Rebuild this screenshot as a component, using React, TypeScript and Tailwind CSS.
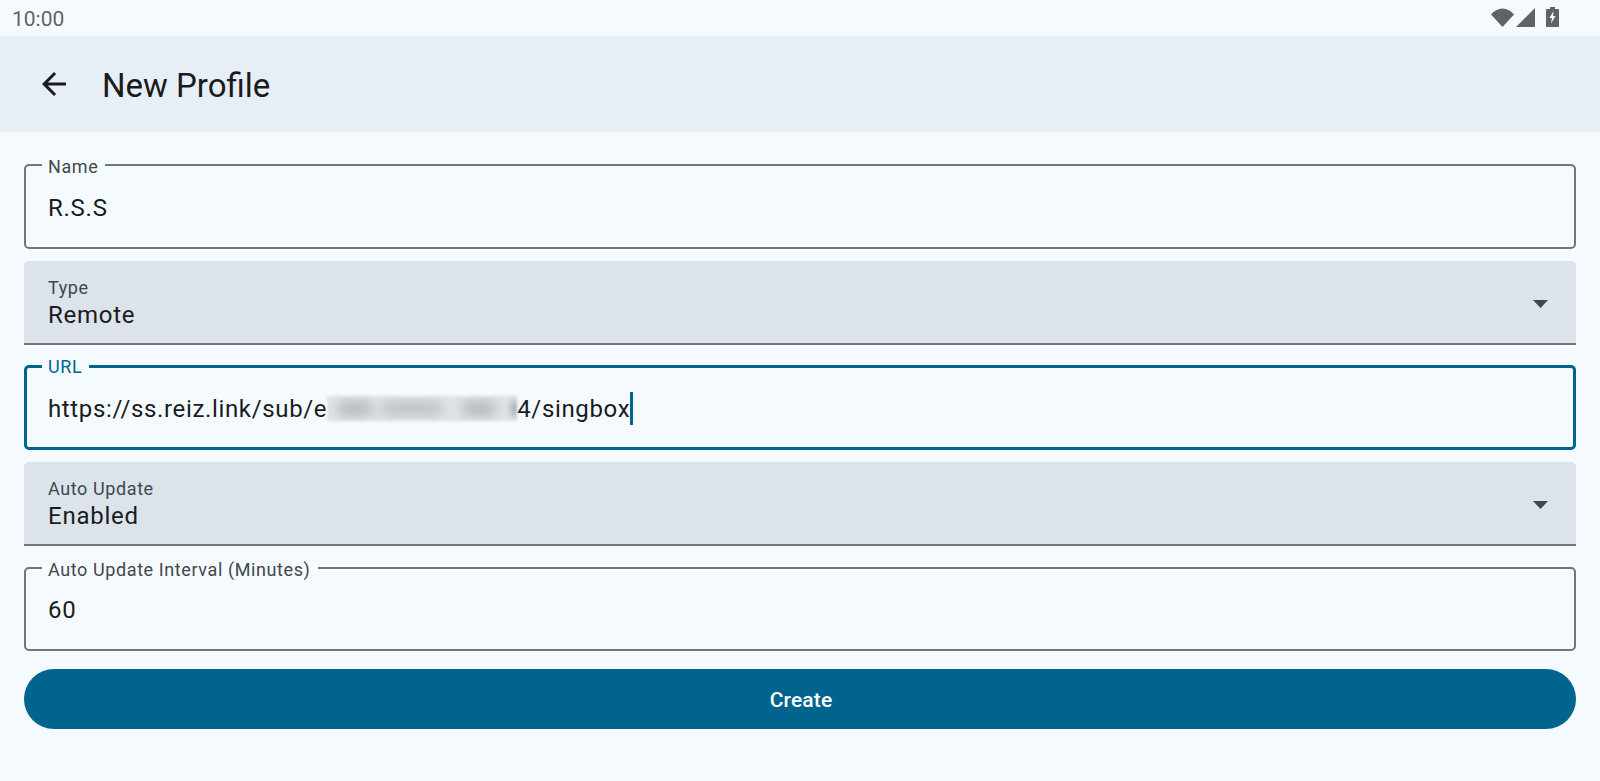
import { ReactNode } from 'react';

const font = { fontFamily: 'Roboto, "Noto Sans", sans-serif' };

function StatusIcons() {
  return (
    <div className="flex items-start pt-[8px] h-[36px]">
      <svg width="23" height="19" viewBox="0 0 23 19" className="mr-[2px]">
        <path d="M0 6.5C3 3 7 0.5 11.5 0.5S20 3 23 6.5L11.5 19z" fill="#5f6368" />
      </svg>
      <svg width="19" height="19" viewBox="0 0 19 19" className="mr-[11px]">
        <path d="M19 0V19H0z" fill="#5f6368" />
      </svg>
      <svg width="13" height="20" viewBox="0 0 13 20" className="mt-[-1px]">
        <path d="M4 0h5v2h3a1 1 0 0 1 1 1v16a1 1 0 0 1-1 1H1a1 1 0 0 1-1-1V3a1 1 0 0 1 1-1h3z" fill="#5f6368" />
        <path d="M7.5 4 3.5 11h2.4l-.8 5.5 4.4-7.5H7z" fill="#f5faff" />
      </svg>
    </div>
  );
}

function OutlinedField({ label, focused, className, children }: { label: string; focused?: boolean; className: string; children: ReactNode }) {
  return (
    <div
      className={`relative flex items-center rounded-[5px] ${focused ? 'border-[3px] border-[#00658e] px-[21px]' : 'border-2 border-[#70787e] px-[22px]'} ${className}`}
    >
      <span
        className={`absolute bg-[#f5faff] pl-[6px] pr-[7px] text-[18px] leading-[20px] tracking-[0.6px] ${focused ? 'left-[15px] top-[-11px] text-[#00658e]' : 'left-[16px] top-[-9px] text-[#40484c]'}`}
      >
        {label}
      </span>
      <div className={`flex items-center pt-[2px] text-[24px] text-[#191c1e] ${focused ? 'tracking-[0.65px]' : 'tracking-[0.75px]'}`}>{children}</div>
    </div>
  );
}

function SelectField({ label, value, className }: { label: string; value: string; className: string }) {
  return (
    <div className={`flex h-[84px] items-center justify-between rounded-t-[5px] border-b-2 border-[#70787e] bg-[#dce3ea] pl-[24px] pr-[28px] ${className}`}>
      <div className="flex flex-col pt-[1px]">
        <span className="text-[18px] leading-[24px] tracking-[0.6px] text-[#40484c]">{label}</span>
        <span className="text-[24px] leading-[30px] tracking-[0.75px] text-[#191c1e]">{value}</span>
      </div>
      <svg width="15" height="8" viewBox="0 0 15 8" className="mt-[4px]">
        <path d="M0 0H15L7.5 8z" fill="#40484c" />
      </svg>
    </div>
  );
}

function BlurredPatch() {
  return (
    <span className="relative h-[25px] w-[190px] overflow-hidden bg-[#dfe4e8] blur-[1.5px]">
      <span className="absolute left-[10px] top-[5px] h-[15px] w-[36px] rounded-full bg-[#b4bbbf] blur-[6px]" />
      <span className="absolute left-[54px] top-[6px] h-[13px] w-[62px] rounded-full bg-[#b8bfc3] blur-[6px]" />
      <span className="absolute left-[134px] top-[5px] h-[15px] w-[36px] rounded-full bg-[#b4bbbf] blur-[6px]" />
      <span className="absolute right-[-4px] top-[4px] h-[17px] w-[10px] rounded-full bg-[#a2aaae] blur-[3px]" />
    </span>
  );
}

export default function App() {
  return (
    <div className="h-[781px] w-[1600px] overflow-hidden bg-[#f5faff]" style={font}>
      <div className="flex h-[36px] items-center justify-between pl-[12px] pr-[41px]">
        <span className="pt-[4px] text-[21px] text-[#5f6368]">10:00</span>
        <StatusIcons />
      </div>

      <header className="flex h-[96px] items-center bg-[#e8eef6] pl-[36px]">
        <svg width="36" height="36" viewBox="0 0 24 24" className="mr-[30px]">
          <path d="M20 11H7.83l5.59-5.59L12 4l-8 8 8 8 1.41-1.41L7.83 13H20z" fill="#191c1e" />
        </svg>
        <h1 className="pt-[4px] text-[33px] text-[#191c1e]">New Profile</h1>
      </header>

      <main className="flex flex-col px-[24px] pt-[32px]">
        <OutlinedField label="Name" className="h-[85px]">
          R.S.S
        </OutlinedField>
        <SelectField label="Type" value="Remote" className="mt-[12px]" />
        <OutlinedField label="URL" focused className="mt-[20px] h-[85px]">
          <span>https://ss.reiz.link/sub/e</span>
          <BlurredPatch />
          <span>4/singbox</span>
          <span className="h-[33px] w-[3px] bg-[#00658e]" />
        </OutlinedField>
        <SelectField label="Auto Update" value="Enabled" className="mt-[12px]" />
        <OutlinedField label="Auto Update Interval (Minutes)" className="mt-[21px] h-[84px]">
          60
        </OutlinedField>
        <button className="mt-[18px] h-[60px] rounded-full bg-[#00658e] pl-[2px] pt-[4px] text-[21px] font-medium tracking-[0.15px] text-white">
          Create
        </button>
      </main>
    </div>
  );
}
